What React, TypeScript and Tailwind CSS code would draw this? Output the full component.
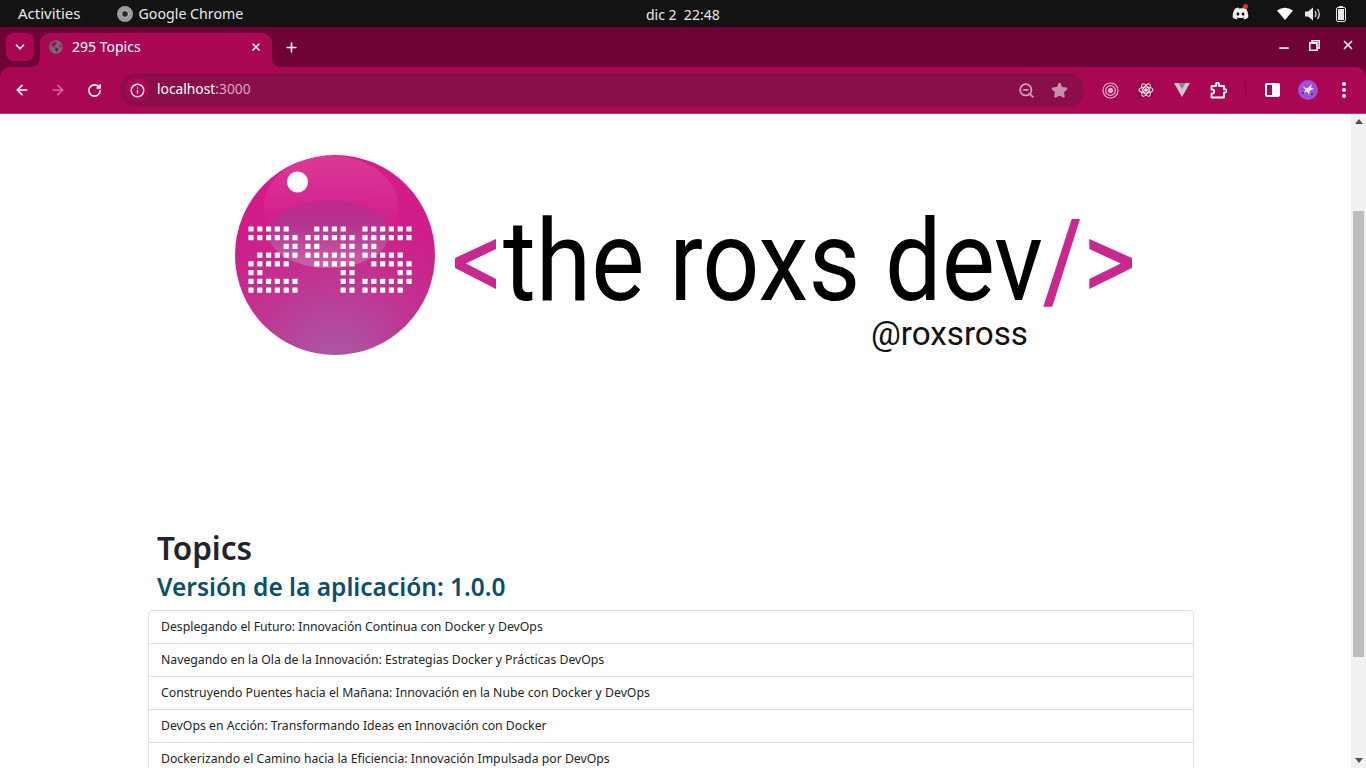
import { ArrowLeft, ArrowRight, ChevronDown, Info, Minus, Plus, RotateCw, Star, X, ZoomOut } from "lucide-react";
import { FaDiscord, FaGlobeAmericas } from "react-icons/fa";

const topics = [
  "Desplegando el Futuro: Innovación Continua con Docker y DevOps",
  "Navegando en la Ola de la Innovación: Estrategias Docker y Prácticas DevOps",
  "Construyendo Puentes hacia el Mañana: Innovación en la Nube con Docker y DevOps",
  "DevOps en Acción: Transformando Ideas en Innovación con Docker",
  "Dockerizando el Camino hacia la Eficiencia: Innovación Impulsada por DevOps",
];

// dot matrix of the "295" in the logo
const digits = [
  { x: 251, rows: ["11111.", "111111", "....11", ".11111", "11111.", "11....", "111111", "111111"] },
  { x: 308, rows: [".1111.", "111111", "11..11", "111111", ".11111", "....11", "....11", "....11"] },
  { x: 365, rows: ["111111", "111111", "11....", "11111.", ".11111", "....11", "111111", "11111."] },
];

function Logo() {
  return (
    <svg width="910" height="210" viewBox="230 150 910 210" className="block ml-[230px] mt-[36px]">
      <defs>
        <radialGradient id="ball" cx="335" cy="365" r="215" gradientUnits="userSpaceOnUse">
          <stop offset="0" stopColor="#a85ca8" />
          <stop offset="0.4" stopColor="#bf3592" />
          <stop offset="0.75" stopColor="#d01c89" />
          <stop offset="1" stopColor="#d81b88" />
        </radialGradient>
        <linearGradient id="glass" x1="0" y1="0" x2="0" y2="1">
          <stop offset="0" stopColor="#ffffff" stopOpacity="0.13" />
          <stop offset="0.75" stopColor="#ffffff" stopOpacity="0" />
        </linearGradient>
        <linearGradient id="lens" x1="0" y1="0" x2="0" y2="1">
          <stop offset="0" stopColor="#b02c8e" stopOpacity="0.5" />
          <stop offset="0.35" stopColor="#b3348f" stopOpacity="0.95" />
          <stop offset="1" stopColor="#cd62ab" />
        </linearGradient>
      </defs>
      <circle cx="335" cy="255" r="100" fill="url(#ball)" />
      <ellipse cx="331" cy="206" rx="67" ry="50" fill="url(#glass)" />
      <ellipse cx="329" cy="234" rx="60" ry="34" fill="url(#lens)" />
      <circle cx="297.500" cy="182" r="10.500" fill="#ffffff" />
      {digits.map((d) =>
        d.rows.map((row, r) =>
          row.split("").map((c, i) =>
            c === "1" ? (
              <rect key={`${d.x}-${r}-${i}`} x={d.x + i * 8.8 - 2.6} y={229 + r * 8.72 - 2.6} width="5.2" height="5.2" fill="#ffffff" rx="0.6" />
            ) : null
          )
        )
      )}
      <polygon points="496,239 496,249 466,263.500 496,279 496,289 455,268 455,258" fill="#c8288f" />
      <text x="503" y="300" textLength="540" lengthAdjust="spacingAndGlyphs" fontFamily="Roboto, sans-serif" fontSize="113" fontWeight="400" fill="#000000">
        the roxs dev
      </text>
      <polygon points="1071.700,219 1080,219 1052.300,306.700 1043.300,306.700" fill="#c8288f" />
      <polygon points="1089.300,239 1132,258 1132,268 1089.300,289 1089.300,279 1120.700,263.500 1089.300,249" fill="#c8288f" />
      <text x="871" y="345" textLength="157" lengthAdjust="spacingAndGlyphs" fontFamily="Roboto, sans-serif" fontSize="33" fill="#111111">
        @roxsross
      </text>
    </svg>
  );
}

function SystemBar() {
  return (
    <div className="h-[27px] bg-[#131313] flex items-center text-[#e8e8e8] text-[14.2px] font-['Noto_Sans',sans-serif] relative shrink-0">
      <span className="ml-[18px] text-[15px]">Activities</span>
      <span className="ml-[36px] w-4 h-4 rounded-full bg-[#8b8b8b] border-[4px] border-[#9a9a9a] flex items-center justify-center">
        <span className="w-2 h-2 rounded-full bg-[#2a2a2a] border border-[#d0d0d0]" />
      </span>
      <span className="ml-[6px]">Google Chrome</span>
      <span className="absolute left-[646px] top-[4px] text-[14px] whitespace-pre">dic 2  22:48</span>
      <div className="ml-auto flex items-center text-white">
        <span className="relative mr-[28px]">
          <FaDiscord size={17} color="#ececec" />
          <span className="absolute right-[1px] top-[-1px] w-[5px] h-[5px] rounded-full bg-[#e5322d]" />
        </span>
        <svg width="16" height="13" viewBox="0 0 16 13" className="mr-[12px]">
          <path d="M0 3.500Q8 -2 16 3.500L8 13Z" fill="#ffffff" />
        </svg>
        <svg width="16" height="14" viewBox="0 0 16 14" className="mr-[15px]">
          <path d="M0 4.500H3L8 0.500V13.500L3 9.500H0Z" fill="#e8e8e8" />
          <path d="M10 4Q12 7 10 10M12.500 2Q16 7 12.500 12" stroke="#e8e8e8" strokeWidth="1.200" fill="none" />
        </svg>
        <svg width="10" height="16" viewBox="0 0 10 16" className="mr-[20px]">
          <rect x="3" y="0" width="4" height="2" fill="#e8e8e8" />
          <rect x="0.500" y="1.500" width="9" height="14" rx="1.500" fill="none" stroke="#e8e8e8" />
          <rect x="2" y="3" width="6" height="11" fill="#e8e8e8" />
        </svg>
      </div>
    </div>
  );
}

function TabStrip() {
  return (
    <div className="h-[40px] bg-[#6f0336] flex items-end relative shrink-0 font-['Noto_Sans',sans-serif]">
      <div className="ml-[6px] mb-[6px] w-[28px] h-[28px] rounded-[8px] bg-[#a90753] flex items-center justify-center">
        <ChevronDown size={14} color="#ffffff" strokeWidth={3} />
      </div>
      <div className="ml-[6px] w-[232px] h-[34px] pb-[7px] rounded-t-[10px] bg-[#a90753] flex items-center text-white text-[14px] relative">
        <svg width="10" height="10" viewBox="0 0 10 10" className="absolute left-[-10px] bottom-0">
          <path d="M10 0Q10 10 0 10H10Z" fill="#a90753" />
        </svg>
        <span className="ml-[9px]">
          <FaGlobeAmericas size={14} color="#6d6f74" />
        </span>
        <span className="ml-[9px]">295 Topics</span>
        <X size={12} color="#ffffff" strokeWidth={3} className="ml-auto mr-[10px]" />
        <svg width="10" height="10" viewBox="0 0 10 10" className="absolute right-[-10px] bottom-0">
          <path d="M0 0Q0 10 10 10H0Z" fill="#a90753" />
        </svg>
      </div>
      <Plus size={15} color="#ffffff" strokeWidth={2.500} className="ml-[12px] mb-[12px]" />
      <div className="ml-auto flex items-center mb-[12px] text-white">
        <Minus size={14} strokeWidth={3} color="#ececec" className="mt-[6px] mr-[18px]" />
        <svg width="11" height="11" viewBox="0 0 11 11" className="mr-[21px]">
          <path d="M3 3V0.700H10.300V8H8M0.700 3H8V10.300H0.700Z" fill="none" stroke="#ececec" strokeWidth="1.800" />
        </svg>
        <X size={14} strokeWidth={3} color="#ececec" className="mr-[11px]" />
      </div>
    </div>
  );
}

function ToolBtn({ children }: { children: React.ReactNode }) {
  return <div className="w-9 h-9 flex items-center justify-center shrink-0">{children}</div>;
}

function Toolbar() {
  return (
    <div className="h-[47px] bg-[#6f0336] shrink-0">
      <div className="h-[47px] bg-[#a90753] rounded-t-[10px] border-b border-[#b8397a] flex items-center pl-[4px] font-['Noto_Sans',sans-serif]">
        <ToolBtn>
          <ArrowLeft size={16} color="#ffffff" strokeWidth={2.500} />
        </ToolBtn>
        <ToolBtn>
          <ArrowRight size={16} color="#cf6a98" strokeWidth={2.500} />
        </ToolBtn>
        <ToolBtn>
          <RotateCw size={15} color="#ffffff" strokeWidth={2.500} />
        </ToolBtn>
        <div className="ml-[8px] w-[964px] h-[34px] rounded-full bg-[#8a0e4a] flex items-center text-[13.800px]">
          <div className="ml-[5px] w-[24px] h-[24px] rounded-full bg-[#a90753] flex items-center justify-center">
            <Info size={15} color="#ffffff" strokeWidth={2.200} />
          </div>
          <span className="ml-[8px] mb-[1px] text-white">
            localhost<span className="text-[#d9a5bf]">:3000</span>
          </span>
          <ZoomOut size={17} color="#d3a0ba" strokeWidth={2.500} className="ml-auto" />
          <Star size={17} color="#c98fad" fill="#c98fad" className="ml-[16px] mr-[16px]" />
        </div>
        <div className="w-[8px]" />
        <ToolBtn>
          <svg width="17" height="17" viewBox="0 0 17 17" fill="none" stroke="#e6b8cf">
            <circle cx="8.500" cy="8.500" r="7.500" strokeWidth="1.200" />
            <circle cx="8.500" cy="8.500" r="4.800" strokeWidth="1.200" />
            <circle cx="8.500" cy="8.500" r="2.200" fill="#e6b8cf" />
          </svg>
        </ToolBtn>
        <ToolBtn>
          <div className="w-4 h-4 bg-[#8a0e4a] flex items-center justify-center">
            <svg width="16" height="16" viewBox="0 0 16 16" fill="none" stroke="#f5dde9" strokeWidth="1.100">
              <ellipse cx="8" cy="8" rx="7" ry="3" />
              <ellipse cx="8" cy="8" rx="7" ry="3" transform="rotate(60 8 8)" />
              <ellipse cx="8" cy="8" rx="7" ry="3" transform="rotate(120 8 8)" />
              <circle cx="8" cy="8" r="1.300" fill="#f5dde9" />
            </svg>
          </div>
        </ToolBtn>
        <ToolBtn>
          <svg width="16" height="14" viewBox="0 0 16 14">
            <path d="M0 0H16L8 14Z" fill="#c9c9c9" />
            <path d="M4.500 0H11.500L8 6Z" fill="#8f7f88" />
          </svg>
        </ToolBtn>
        <ToolBtn>
          <svg width="17" height="17" viewBox="0 0 17 17" fill="none" stroke="#ffffff" strokeWidth="1.800" strokeLinejoin="round">
            <path d="M1.500 4H6V2.200A1.400 1.400 0 0 1 9 2.200V4H14V7.300H15.300A1.400 1.400 0 0 1 15.300 10.300H14V15.500H1.500V11.500H3A2.200 2.200 0 0 0 3 7.500H1.500Z" />
          </svg>
        </ToolBtn>
        <div className="w-[18px] flex justify-center">
          <div className="w-px h-[16px] bg-[#6f0336]" />
        </div>
        <ToolBtn>
          <div className="w-[15px] h-[14px] border-2 border-white rounded-[2px] flex justify-end">
            <div className="w-[6px] bg-white" />
          </div>
        </ToolBtn>
        <ToolBtn>
          <svg width="20" height="20" viewBox="0 0 20 20">
            <circle cx="10" cy="10" r="10" fill="#9a52d6" />
            <path d="M4 6L9 8.500L14 4L13 7.500L16 9L12 10.500L11 15L9 11.500L6 13L7.500 9.500Z" fill="#f0e8f5" />
            <circle cx="5" cy="13" r="1" fill="#4d2a6b" />
            <circle cx="14" cy="14" r="1" fill="#4d2a6b" />
          </svg>
        </ToolBtn>
        <ToolBtn>
          <div className="flex flex-col gap-[2.500px]">
            <span className="w-[3.500px] h-[3.500px] rounded-full bg-white" />
            <span className="w-[3.500px] h-[3.500px] rounded-full bg-white" />
            <span className="w-[3.500px] h-[3.500px] rounded-full bg-white" />
          </div>
        </ToolBtn>
      </div>
    </div>
  );
}

function Scrollbar() {
  return (
    <div className="w-[15px] bg-[#f1f1f1] flex flex-col items-center shrink-0">
      <div className="mt-[5px] w-0 h-0 border-x-[4px] border-x-transparent border-b-[5px] border-b-[#505050]" />
      <div className="mt-[87px] w-[11px] h-[446px] bg-[#bdbdbd]" />
      <div className="mt-auto mb-[5px] w-0 h-0 border-x-[4px] border-x-transparent border-t-[5px] border-t-[#505050]" />
    </div>
  );
}

export default function App() {
  return (
    <div className="h-[768px] flex flex-col overflow-hidden bg-white">
      <SystemBar />
      <TabStrip />
      <Toolbar />
      <div className="flex-1 flex min-h-0">
        <main className="flex-1 min-w-0 overflow-hidden font-['Noto_Sans',sans-serif]">
          <Logo />
          <h1 className="mt-[168px] ml-[157px] text-[31.500px] leading-[40px] font-semibold text-[#212529]">Topics</h1>
          <h2 className="mt-[3px] ml-[157px] text-[24.500px] leading-[32px] font-semibold text-[#0b4f6c]">Versión de la aplicación: 1.0.0</h2>
          <ul className="mt-[7px] ml-[148px] w-[1046px] border border-[#dfdfdf] rounded-t-[4px]">
            {topics.map((t, i) => (
              <li key={t} className={`pl-[12px] flex items-center text-[12.250px] text-[#212529] ${i > 0 ? "h-[33px] border-t border-[#dfdfdf]" : "h-[32px]"}`}>
                {t}
              </li>
            ))}
          </ul>
        </main>
        <Scrollbar />
      </div>
    </div>
  );
}
